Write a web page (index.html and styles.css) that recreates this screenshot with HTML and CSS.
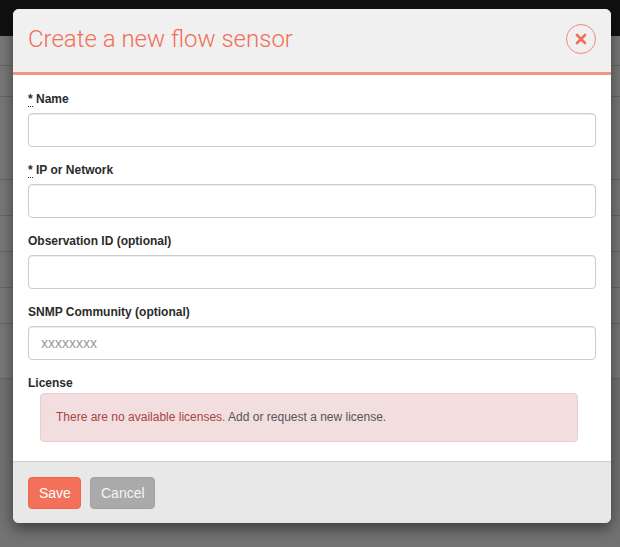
FILE: index.html
```html
<!DOCTYPE html>
<html>
<head>
<meta charset="utf-8">
<link rel="stylesheet" href="styles.css">
</head>
<body>
<div class="page">
  <div class="topbar"></div>
  <div class="table">
    <div class="row r1"></div>
    <div class="row r2"></div>
    <div class="row r3"></div>
    <div class="row r4"></div>
    <div class="row r5"></div>
    <div class="row r6"></div>
    <div class="row r7"></div>
    <div class="row r8"></div>
  </div>
</div>
<div class="backdrop"></div>
<div class="modal-wrap">
  <div class="modal">
    <div class="modal-header">
      <h2 class="modal-title">Create a new flow sensor</h2>
      <button class="close" type="button" aria-label="Close">
        <svg width="12" height="12" viewBox="0 0 12 12"><path d="M2 2 L10 10 M10 2 L2 10" stroke="#f26e55" stroke-width="2.6" stroke-linecap="round"/></svg>
      </button>
    </div>
    <div class="modal-body">
      <div class="form-group">
        <label class="label"><abbr class="req">*</abbr> Name</label>
        <input class="input" type="text">
      </div>
      <div class="form-group">
        <label class="label"><abbr class="req">*</abbr> IP or Network</label>
        <input class="input" type="text">
      </div>
      <div class="form-group">
        <label class="label">Observation ID (optional)</label>
        <input class="input" type="text">
      </div>
      <div class="form-group">
        <label class="label">SNMP Community (optional)</label>
        <input class="input" type="text" placeholder="xxxxxxxx">
      </div>
      <div class="form-group last">
        <label class="label">License</label>
        <div class="alert"><span class="alert-red">There are no available licenses.</span> <a class="alert-link">Add or request a new license.</a></div>
      </div>
    </div>
    <div class="modal-footer">
      <button class="btn btn-save" type="button">Save</button>
      <button class="btn btn-cancel" type="button">Cancel</button>
    </div>
  </div>
</div>
</body>
</html>
```

FILE: styles.css
```css
* { box-sizing: border-box; }
html, body { margin: 0; padding: 0; }
body {
  width: 620px;
  height: 547px;
  overflow: hidden;
  position: relative;
  background: #e6e6e6;
  font-family: "Liberation Sans", Arial, sans-serif;
}
.page { height: 547px; }
.topbar { height: 36px; background: #222; }
.table { background: #eee; }
.row { height: 37px; border-bottom: 1px solid #cfcfcf; background: #f2f2f2; }
.r1 { height: 30px; }
.r2 { height: 31px; }
.r3 { height: 83px; }
.r4 { height: 36px; }
.r5 { height: 36px; }
.r6 { height: 36px; }
.r7 { height: 36px; }
.r8 { height: 55px; }
.backdrop {
  position: absolute;
  inset: 0;
  background: rgba(0, 0, 0, 0.5);
}
.modal-wrap {
  position: absolute;
  inset: 0;
  padding: 9px 9px 0 13px;
}
.modal {
  width: 598px;
  background: #fff;
  border-radius: 6px;
  overflow: hidden;
  box-shadow: 0 5px 15px rgba(0, 0, 0, 0.5);
}
.modal-header {
  height: 66px;
  background: #f0f0f0;
  border-bottom: 3px solid #f39581;
  display: flex;
  align-items: center;
  justify-content: space-between;
  padding: 0 15px 3px 15px;
}
.modal-title {
  margin: 0;
  font-family: Roboto, "Liberation Sans", sans-serif;
  font-weight: 300;
  font-size: 24px;
  color: #f26e55;
}
.close {
  width: 30px;
  height: 30px;
  border-radius: 50%;
  border: 1px solid #f28b78;
  background: transparent;
  padding: 0;
  display: flex;
  align-items: center;
  justify-content: center;
  margin-right: 0;
}
.modal-body {
  padding: 16px 15px 4px 15px;
}
.form-group { margin-bottom: 15px; }
.label {
  display: block;
  font-size: 12px;
  font-weight: bold;
  color: #2b2b2b;
  line-height: 17px;
  margin-bottom: 5px;
}
.req {
  text-decoration: none;
  border-bottom: 1px dotted #333;
  cursor: help;
}
.input {
  display: block;
  width: 100%;
  height: 34px;
  border: 1px solid #ccc;
  border-radius: 4px;
  padding: 6px 12px;
  font-family: "Liberation Sans", Arial, sans-serif;
  font-size: 14px;
  color: #555;
  box-shadow: inset 0 1px 1px rgba(0, 0, 0, 0.075);
}
.input::placeholder { color: #999; }
.alert {
  margin: -4px 18px 0 12px;
  padding: 15px 15px;
  background: #f2dede;
  border: 1px solid #ebccd1;
  border-radius: 4px;
  font-size: 12px;
  line-height: 17px;
}
.alert-red { color: #a94442; }
.alert-link { color: #555; }
.modal-footer {
  background: #e8e8e8;
  border-top: 1px solid #cdcdcd;
  padding: 15px 15px 14px 15px;
  display: flex;
  gap: 9px;
}
.btn {
  height: 32px;
  border-radius: 4px;
  font-family: "Liberation Sans", Arial, sans-serif;
  font-size: 14px;
  padding: 0 10px;
  color: #fff;
  cursor: pointer;
}
.btn-save {
  width: 53px;
  background: #f3715a;
  border: 1px solid #f0654c;
}
.btn-cancel {
  width: 65px;
  background: #aaa;
  border: 1px solid #a0a0a0;
  color: #f4f4f4;
}
```
